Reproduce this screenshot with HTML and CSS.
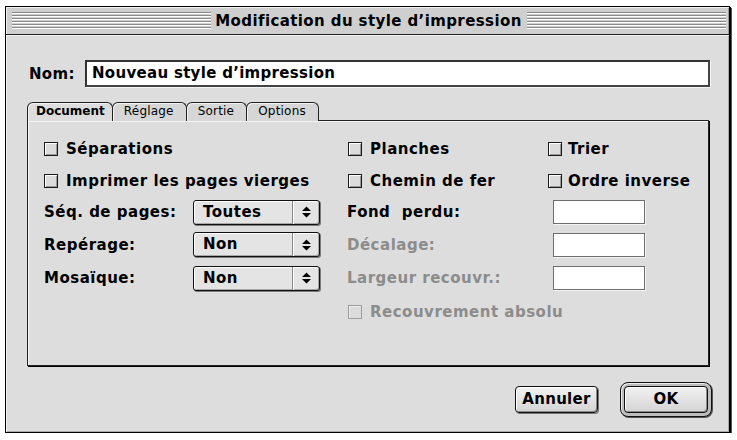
FILE: index.html
```
<!DOCTYPE html>
<html lang="fr">
<head>
<meta charset="utf-8">
<title>Modification du style d’impression</title>
<link rel="stylesheet" href="styles.css">
</head>
<body>
<div class="window">
  <div class="titlebar">
    <div class="stripes"></div>
    <div class="title">Modification du style d’impression</div>
    <div class="stripes"></div>
  </div>
  <div class="content">
    <div class="name-row">
      <span class="name-label">Nom:</span>
      <div class="name-field">Nouveau style d’impression</div>
    </div>
    <div class="tabs">
      <div class="tab active">Document</div>
      <div class="tab">Réglage</div>
      <div class="tab">Sortie</div>
      <div class="tab">Options</div>
    </div>
    <div class="panel">
      <div class="grid">
        <div class="check c-left"><span class="box"></span>Séparations</div>
        <div class="check c-mid"><span class="box"></span>Planches</div>
        <div class="check c-right"><span class="box"></span>Trier</div>

        <div class="check c-left"><span class="box"></span>Imprimer les pages vierges</div>
        <div class="check c-mid"><span class="box"></span>Chemin de fer</div>
        <div class="check c-right"><span class="box"></span>Ordre inverse</div>

        <div class="label c-lab">Séq. de pages:</div>
        <div class="popup c-pop"><span class="popup-text">Toutes</span><span class="popup-arrow"><svg width="9" height="12" viewBox="0 0 9 12"><path d="M0 5 L4.5 0.5 L9 5Z M0 7 L4.5 11.5 L9 7Z" fill="#000"/></svg></span></div>
        <div class="label c-mid">Fond&nbsp; perdu:</div>
        <div class="field c-right"></div>

        <div class="label c-lab">Repérage:</div>
        <div class="popup c-pop"><span class="popup-text">Non</span><span class="popup-arrow"><svg width="9" height="12" viewBox="0 0 9 12"><path d="M0 5 L4.5 0.5 L9 5Z M0 7 L4.5 11.5 L9 7Z" fill="#000"/></svg></span></div>
        <div class="label c-mid disabled">Décalage:</div>
        <div class="field c-right"></div>

        <div class="label c-lab">Mosaïque:</div>
        <div class="popup c-pop"><span class="popup-text">Non</span><span class="popup-arrow"><svg width="9" height="12" viewBox="0 0 9 12"><path d="M0 5 L4.5 0.5 L9 5Z M0 7 L4.5 11.5 L9 7Z" fill="#000"/></svg></span></div>
        <div class="label c-mid disabled">Largeur recouvr.:</div>
        <div class="field c-right"></div>

        <div class="check c-wide disabled"><span class="box"></span>Recouvrement absolu</div>
      </div>
    </div>
    <div class="buttons">
      <div class="button">Annuler</div>
      <div class="default-ring"><div class="button ok">OK</div></div>
    </div>
  </div>
</div>
</body>
</html>
```
FILE: styles.css
```
html, body {
  margin: 0;
  padding: 0;
  background: #ffffff;
}

body {
  font-family: "DejaVu Sans", "Liberation Sans", sans-serif;
  font-weight: bold;
  font-size: 15px;
  letter-spacing: 0.5px;
  color: #000;
}

.window {
  box-sizing: border-box;
  margin: 6px 0 0 5px;
  width: 725px;
  height: 427px;
  border: 1px solid #000;
  box-shadow: 1px 1px 0 #000, 2px 2px 0 #555;
  background: #dddddd;
  display: flex;
  flex-direction: column;
}

.titlebar {
  box-sizing: border-box;
  height: 28px;
  background: #cfcfcf;
  border-bottom: 1px solid #222;
  box-shadow: inset 1px 1px 0 #f2f2f2, inset -1px 0 0 #999;
  display: flex;
  align-items: center;
  padding: 0 3px 0 6px;
}

.stripes {
  flex: 1;
  height: 18px;
  margin-top: 1px;
  background: repeating-linear-gradient(to bottom, #8a8a8a 0 1px, #ffffff 1px 2px, #cfcfcf 2px 3px);
}

.title {
  padding: 0 5px 0 4px;
  font-size: 15px;
  letter-spacing: 0.4px;
  white-space: nowrap;
  line-height: 18px;
}

.content {
  flex: 1;
  box-sizing: border-box;
  padding: 25px 20px 0 21px;
  box-shadow: inset 1px 1px 0 #f4f4f4, inset -1px -1px 0 #aaa;
}

.name-row {
  display: flex;
  align-items: center;
  height: 27px;
}

.name-label {
  width: 56px;
  padding-left: 2px;
  flex: none;
  font-size: 15px;
  letter-spacing: 0.3px;
}

.name-field {
  box-sizing: border-box;
  flex: 1;
  margin-right: -1px;
  height: 27px;
  background: #fff;
  border: 2px solid #333;
  border-right-color: #444;
  border-bottom-color: #444;
  box-shadow: 1px 1px 0 #f4f4f4;
  padding-left: 5px;
  line-height: 23px;
  font-size: 15px;
  letter-spacing: 0.3px;
}

.tabs {
  display: flex;
  margin-top: 15px;
  height: 18px;
  position: relative;
  z-index: 1;
}

.tab {
  box-sizing: border-box;
  height: 19px;
  border: 1px solid #222;
  border-bottom: none;
  border-radius: 6px 6px 0 0;
  background: #d6d6d6;
  box-shadow: inset 1px 1px 0 #f2f2f2;
  font-weight: normal;
  font-size: 12px;
  letter-spacing: 0.2px;
  line-height: 17px;
  padding: 0 12px 0 11px;
  margin-right: -1px;
}

.tab.active {
  background: #dddddd;
  font-weight: bold;
  letter-spacing: 0;
  padding: 0 7px 0 8px;
  height: 19px;
}

.panel {
  box-sizing: border-box;
  height: 246px;
  border: 1px solid #222;
  box-shadow: 1px 1px 0 #000, inset 1px 1px 0 #f4f4f4;
  background: #dddddd;
  padding: 11px 0 0 16px;
}

.grid {
  display: grid;
  grid-template-columns: 149px 127px 28px 200px 1fr;
  grid-template-rows: 33px 31px 32px 33px 34px 34px;
  align-items: center;
}

.c-left { grid-column: 1 / 4; }
.c-lab { grid-column: 1; }
.c-pop { grid-column: 2; }
.c-mid { grid-column: 4; }
.c-right { grid-column: 5; }
.c-wide { grid-column: 4 / 6; grid-row: 6; }

.check {
  display: flex;
  align-items: center;
  gap: 8px;
  white-space: nowrap;
  line-height: 18px;
}

.box {
  box-sizing: border-box;
  width: 14px;
  height: 14px;
  flex: none;
  border: 1px solid #1a1a1a;
  background: #dcdcdc;
  box-shadow: inset 1px 1px 0 #ffffff, inset -1px -1px 0 #9a9a9a;
}

.c-right.check { gap: 6px; }

.disabled {
  color: #8c8c8c;
}

.check.disabled .box {
  border-color: #9c9c9c;
  box-shadow: inset 1px 1px 0 #ececec;
}

.label {
  white-space: nowrap;
  line-height: 18px;
}

.c-mid.label { margin-left: -1px; }

.popup {
  box-sizing: border-box;
  height: 25px;
  border: 1px solid #111;
  border-radius: 3px;
  background: #e4e4e4;
  box-shadow: inset 1px 1px 0 #ffffff, inset -1px -1px 0 #a8a8a8, 1px 1px 0 #7a7a7a;
  display: flex;
  align-items: stretch;
}

.popup-text {
  flex: 1;
  padding-left: 9px;
  line-height: 22px;
}

.popup-arrow {
  width: 26px;
  border-left: 1px solid #888;
  box-shadow: inset 1px 0 0 #fff;
  display: flex;
  align-items: center;
  justify-content: center;
}

.field {
  box-sizing: border-box;
  width: 92px;
  height: 24px;
  margin-left: 5px;
  background: #fff;
  border: 1px solid #6e6e6e;
  box-shadow: 1px 1px 0 #f4f4f4;
}

.buttons {
  display: flex;
  justify-content: flex-end;
  align-items: center;
  gap: 22px;
  margin-top: 16px;
  margin-right: -3px;
}

.button {
  box-sizing: border-box;
  width: 83px;
  height: 27px;
  border: 1px solid #111;
  border-radius: 4px;
  background: linear-gradient(#f2f2f2, #d4d4d4);
  box-shadow: inset 1px 1px 0 #ffffff, inset -1px -1px 0 #8a8a8a, 1px 1px 0 #777;
  text-align: center;
  line-height: 25px;
  font-size: 15px;
  letter-spacing: 0.3px;
}

.default-ring {
  box-sizing: border-box;
  width: 92px;
  height: 35px;
  border: 1px solid #111;
  border-radius: 8px;
  background: #bdbdbd;
  box-shadow: inset 1px 1px 0 #eee, 1px 1px 0 #555;
  padding: 3px;
}

.button.ok {
  width: 84px;
  height: 27px;
  box-shadow: inset 1px 1px 0 #ffffff, inset -1px -1px 0 #8a8a8a;
}
```
